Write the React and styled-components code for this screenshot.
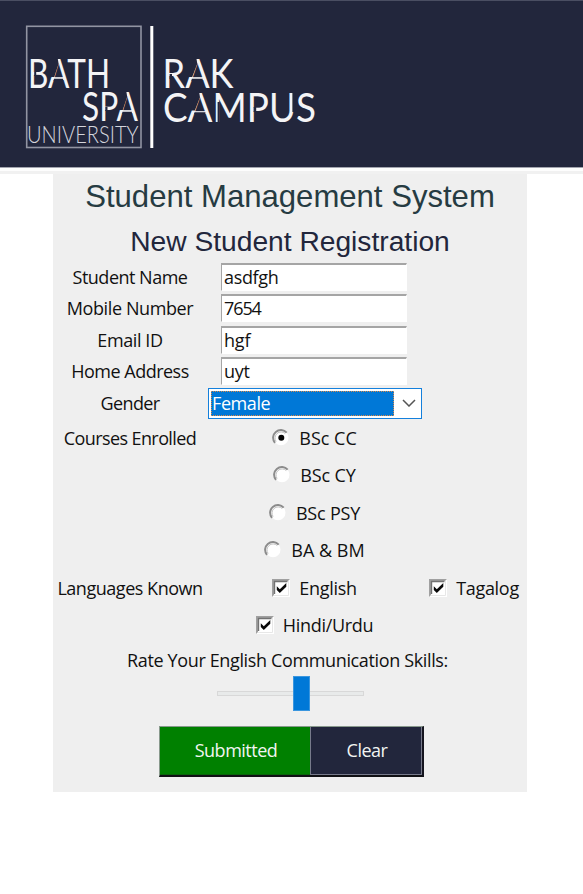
import React, { useState } from 'react';
import styled, { createGlobalStyle } from 'styled-components';

const Global = createGlobalStyle`
  * { box-sizing: border-box; }
  body { margin: 0; background: #fff; }
`;

const Page = styled.main`
  width: 583px;
  min-height: 894px;
  background: #fff;
  color: #111;
  font: 18px/24px "Open Sans", "Noto Sans", sans-serif;
`;

const Header = styled.header`
  height: 168px;
  background: #22263c;
  border-top: 1px solid #4a4e62;
  border-bottom: 1px solid #a3a5af;
`;

const Logo = styled.svg`
  display: block;
  font-family: Lato, sans-serif;
`;

const Rule = styled.div`
  height: 6px;
  border-top: 3px solid #fdfdfd;
  background: #f1f1f1;
`;

const Panel = styled.section`
  width: 474px;
  height: 618px;
  margin-left: 53px;
  background: #efefef;
`;

const Heading = styled.h1`
  margin: 0;
  height: 45px;
  text-align: center;
  font: 400 31.1px/45px "Liberation Sans", Arial, sans-serif;
  color: #263b42;
`;

const SubHeading = styled.h2`
  margin: 0;
  height: 42px;
  text-align: center;
  font: 400 28.2px/44px "Liberation Sans", Arial, sans-serif;
  color: #22263c;
`;

const Form = styled.form`
  display: grid;
  grid-template-columns: 155px 214px 105px;
  grid-template-rows: repeat(4, 31.5px) 32px repeat(6, 37.5px) 31px 37px 78px;
  align-items: center;
  justify-items: center;
`;

const Text = styled.span`
  letter-spacing: ${(p) => p.$track ?? -0.4}px;
  white-space: nowrap;
`;

const Label = styled(Text)`
  grid-column: 1;
  margin-right: 1px;
`;

const Field = styled.input`
  grid-column: 2;
  width: 186px;
  height: 28px;
  margin: 0 2px 0 0;
  padding: 0 1px 1px 2px;
  border: 1px solid;
  border-width: 2px 1px 1px 1px;
  border-color: #a5a5a5 #fff #fff #a5a5a5;
  outline: 0;
  background: #fff;
  color: #111;
  font: inherit;
  letter-spacing: ${(p) => p.$track}px;
`;

const Combo = styled.div`
  grid-column: 2;
  display: flex;
  align-items: center;
  justify-content: space-between;
  width: 214px;
  height: 31px;
  padding: 2px 5px 2px 2px;
  border: 1px solid #1480dc;
  background: #fff;
`;

const Selected = styled.div`
  width: 183px;
  height: 25px;
  border: 1px dotted #d98a4a;
  background: #0078d7;
  color: #fff;
  line-height: 23px;
`;

const Choice = styled.label`
  grid-column: ${(p) => p.$col ?? 2};
  display: flex;
  align-items: center;
  gap: 9px;
  margin-right: 1px;
`;

const Prompt = styled(Text)`
  grid-column: 1 / -1;
  margin-right: 5px;
`;

const Slider = styled.div`
  grid-column: 1 / -1;
  display: grid;
  align-items: center;
  width: 147px;
  height: 35px;
`;

const Track = styled.div`
  grid-area: 1 / 1;
  height: 5px;
  border: 1px solid #d8d8d8;
  background: #e8eaea;
`;

const Thumb = styled.div`
  grid-area: 1 / 1;
  width: 17px;
  height: 35px;
  margin-left: 76px;
  border: 1px solid #3a96df;
  background: #0078d7;
`;

const Actions = styled.div`
  grid-column: 1 / -1;
  display: flex;
  width: 265px;
  height: 51px;
  margin-left: 3px;
  border: 1px solid #88998c;
  border-width: 1px 2px 2px 1px;
  border-right-color: #15151f;
  border-bottom-color: #101014;
`;

const Button = styled.button`
  width: ${(p) => p.$width}px;
  padding: 0 0 0 2px;
  border: solid ${(p) => p.$edge};
  border-width: ${(p) => p.$borders};
  background: ${(p) => p.$fill};
  color: #f2f5f2;
  font: inherit;
`;

const Glyph = styled.svg`
  display: block;
  flex: none;
`;

function Radio({ checked }) {
  return (
    <Glyph width="18" height="18" viewBox="0 0 18 18">
      <circle cx="9" cy="8.7" r="7.5" fill="#fff" />
      <path d="M3 13.8A7.4 7.4 0 0 1 14.7 3.7" fill="none" stroke="#8c8c8c" strokeWidth="2" />
      <path d="M4.1 12.5A6.1 6.1 0 0 1 13.2 4.5" fill="none" stroke="#c1c1c1" strokeWidth="1" />
      {checked && <circle cx="9.3" cy="8.7" r="3" fill="#050505" />}
    </Glyph>
  );
}

function Check() {
  return (
    <Glyph width="18" height="18" viewBox="0 0 18 18">
      <path d="M0 0H18V18H0Z" fill="#fff" />
      <path d="M0 18V0H18L16 2H2V16Z" fill="#a0a0a0" />
      <path d="M2.5 15V2.5H15.5" fill="none" stroke="#727272" strokeWidth="1.4" />
      <path d="M2 16.5H16.5V2" fill="none" stroke="#e7e7e7" />
      <path d="M4.8 7.2L7.8 10.2L14.3 4V7.8L7.8 14L4.8 11Z" fill="#090909" />
    </Glyph>
  );
}

function Word({ x, y, w, size = 40, weight = 400, fill = '#f4f4f6', children }) {
  return (
    <text x={x} y={y} fontSize={size} fontWeight={weight} fill={fill} textLength={w} lengthAdjust="spacingAndGlyphs">
      {children}
    </text>
  );
}

// Opens the upper left leg of an "A" and thins its crossbar, for the stencil look.
function StencilA({ cx, base, half }) {
  const bar = base - 11.2;
  return (
    <path
      fill="#22263c"
      d={`M${cx - half * 0.8} ${bar}L${cx - 2.6} ${base - 30}H${cx - 0.9}L${cx} ${base - 24.5}L${cx - half * 0.42} ${bar}Z
        M${cx - half * 0.44} ${bar + 1.6}H${cx + half * 0.44}V${bar + 3.6}H${cx - half * 0.5}Z`}
    />
  );
}

const fields = [
  ['Student Name', 'asdfgh', -0.5, -0.35],
  ['Mobile Number', '7654', -0.4, -1.1],
  ['Email ID', 'hgf', -0.4, -0.2],
  ['Home Address', 'uyt', -0.5, -0.3],
];

const courses = [
  ['BSc CC', 0],
  ['BSc CY', -0.1],
  ['BSc PSY', -0.2],
  ['BA & BM', 0],
];

export default function App() {
  const [course, setCourse] = useState('BSc CC');
  return (
    <Page>
      <Global />
      <Header>
        <Logo width="583" height="166" viewBox="0 1 583 166">
          <rect x="26.7" y="26.3" width="114.3" height="121.2" fill="none" stroke="#9294a2" strokeWidth="1.6" />
          <path d="M151.8 26V148" stroke="#fff" strokeWidth="3" />
          <Word x="28" y="88.3" w="82">BATH</Word>
          <Word x="82" y="121.3" w="56">SPA</Word>
          <Word x="27" y="143" w="111.5" size={24} weight={300} fill="#d4d5dc">UNIVERSITY</Word>
          <Word x="162.5" y="88.3" w="71">RAK</Word>
          <Word x="163" y="121.8" w="153">CAMPUS</Word>
          <StencilA cx={58.6} base={88.3} half={10.3} />
          <StencilA cx={127.2} base={121.3} half={10.6} />
          <StencilA cx={197.3} base={88.3} half={12.2} />
          <StencilA cx={200} base={121.8} half={12.3} />
          <path
            fill="#22263c"
            d="M34.2 72h2v4h-2ZM105.3 107h2.2v4h-2.2ZM169.6 74h2.4v5h-2.4ZM253.6 107h2.6v5h-2.6ZM217.6 102h2v21h-2ZM292.4 91h3v21h-3Z"
          />
        </Logo>
      </Header>
      <Rule />
      <Panel>
        <Heading>Student Management System</Heading>
        <SubHeading>New Student Registration</SubHeading>
        <Form onSubmit={(e) => e.preventDefault()}>
          {fields.map(([name, value, track, valueTrack]) => (
            <React.Fragment key={name}>
              <Label $track={track}>{name}</Label>
              <Field defaultValue={value} $track={valueTrack} aria-label={name} />
            </React.Fragment>
          ))}
          <Label $track={-0.65}>Gender</Label>
          <Combo>
            <Selected><Text>Female</Text></Selected>
            <Glyph width="14" height="8" viewBox="0 0 14 8">
              <path d="M1 1L7 7L13 1" fill="none" stroke="#555" strokeWidth="1.5" />
            </Glyph>
          </Combo>
          <Label $track={-0.6}>Courses Enrolled</Label>
          {courses.map(([name, track]) => (
            <Choice key={name} onClick={() => setCourse(name)}>
              <Radio checked={course === name} />
              <Text $track={track}>{name}</Text>
            </Choice>
          ))}
          <Label $track={-0.47}>Languages Known</Label>
          <Choice><Check /><Text $track={-0.3}>English</Text></Choice>
          <Choice $col={3}><Check /><Text $track={-0.3}>Tagalog</Text></Choice>
          <Choice><Check /><Text $track={-0.3}>Hindi/Urdu</Text></Choice>
          <Prompt $track={-0.36}>Rate Your English Communication Skills:</Prompt>
          <Slider><Track /><Thumb /></Slider>
          <Actions>
            <Button type="submit" $width={150} $fill="#008000" $edge="#0a650a" $borders="0 0 1px 0"><Text $track={-0.5}>Submitted</Text></Button>
            <Button type="button" $width={112} $fill="#22263c" $edge="#777a8b" $borders="0 1px 1px 1px"><Text $track={-0.5}>Clear</Text></Button>
          </Actions>
        </Form>
      </Panel>
    </Page>
  );
}
